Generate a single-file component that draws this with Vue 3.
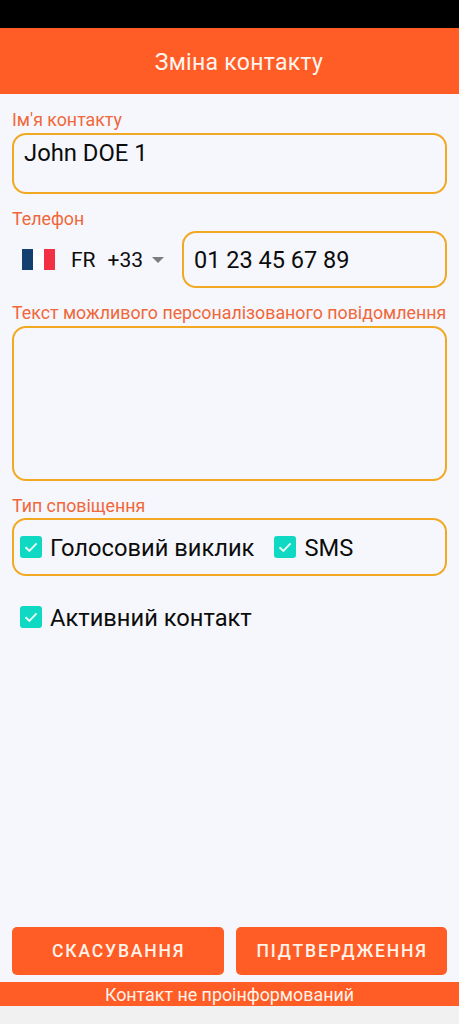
<script setup>
const boxes = ['Голосовий виклик', 'SMS']
</script>

<template>
  <div class="app">
    <div class="status"></div>
    <header class="head">Зміна контакту</header>
    <main class="form">
      <label class="lab l1">Ім'я контакту</label>
      <div class="box name">John DOE 1</div>
      <label class="lab l2">Телефон</label>
      <div class="phone">
        <div class="picker">
          <span class="flag"><i class="b"></i><i class="w"></i><i class="r"></i></span>
          <span class="cc">FR</span>
          <span class="dial">+33</span>
          <span class="caret"></span>
        </div>
        <div class="box num">01 23 45 67 89</div>
      </div>
      <label class="lab l3">Текст можливого персоналізованого повідомлення</label>
      <div class="box msg"></div>
      <label class="lab l4">Тип сповіщення</label>
      <div class="box types">
        <div v-for="b in boxes" :key="b" class="check">
          <svg class="tick" viewBox="0 0 22 22"><rect width="22" height="22" rx="3" fill="#0fd9c3"/><path d="M5.5 11.2l3.9 3.7 7.2-7.6" fill="none" stroke="#e9fbf8" stroke-width="1.9"/></svg>
          <span class="txt">{{ b }}</span>
        </div>
      </div>
      <div class="check active">
        <svg class="tick" viewBox="0 0 22 22"><rect width="22" height="22" rx="3" fill="#0fd9c3"/><path d="M5.5 11.2l3.9 3.7 7.2-7.6" fill="none" stroke="#e9fbf8" stroke-width="1.9"/></svg>
        <span class="txt">Активний контакт</span>
      </div>
      <div class="actions">
        <button class="btn">СКАСУВАННЯ</button>
        <button class="btn">ПІДТВЕРДЖЕННЯ</button>
      </div>
    </main>
    <div class="notice">Контакт не проінформований</div>
    <div class="nav"></div>
  </div>
</template>

<style scoped>
.app { width: 459px; height: 1024px; display: flex; flex-direction: column; background: #f6f7fc; font-family: Roboto, sans-serif; color: #0c0c0c; overflow: hidden; }
.status { height: 28px; background: #000; flex: none; }
.head { height: 66px; flex: none; background: #ff5c26; color: #fff5ee; font-size: 23px; letter-spacing: 0.3px; display: flex; align-items: center; justify-content: center; padding: 2px 0 0 19px; box-sizing: border-box; }
.form { flex: 1; display: flex; flex-direction: column; padding: 0 12px; min-height: 0; }
.lab { display: block; color: #f0673a; font-size: 17.8px; line-height: 20px; white-space: nowrap; }
.l1 { margin-top: 16px; }
.l2 { margin-top: 15px; }
.l3 { margin-top: 15px; }
.l4 { margin-top: 15px; }
.box { border: 2px solid #f2a922; border-radius: 14px; box-sizing: border-box; }
.name { height: 61px; margin-top: 3px; padding: 3px 10px; font-size: 23.8px; line-height: 30px; }
.phone { display: flex; align-items: center; height: 58px; margin-top: 1px; }
.picker { width: 170px; flex: none; display: flex; align-items: center; padding-left: 10px; box-sizing: border-box; font-size: 21px; }
.flag { display: flex; width: 33px; height: 21px; }
.flag i { flex: 1; }
.b { background: #14406f; }
.w { background: #fff; }
.r { background: #f32f44; }
.cc { margin-left: 16px; padding-top: 2px; }
.dial { margin-left: 12px; padding-top: 2px; }
.caret { margin-left: 9px; margin-top: 1px; border-left: 6px solid transparent; border-right: 6px solid transparent; border-top: 6px solid #7d7d7d; }
.num { flex: 1; height: 57px; display: flex; align-items: center; padding: 2px 0 0 10px; font-size: 23.5px; }
.msg { height: 155px; margin-top: 3px; }
.types { height: 58px; margin-top: 2px; display: flex; align-items: center; padding-left: 6px; gap: 20px; }
.check { display: flex; align-items: center; font-size: 23.7px; }
.txt { padding-top: 2px; }
.tick { width: 22px; height: 22px; margin-right: 8px; flex: none; }
.active { margin-top: 26px; padding-left: 8px; }
.actions { margin-top: auto; margin-bottom: 7px; display: flex; gap: 12px; }
.btn { flex: 1; height: 48px; border: 0; border-radius: 5px; background: #ff5c26; color: #fff3ea; font-family: Roboto, sans-serif; font-weight: 500; font-size: 17.5px; letter-spacing: 1.85px; padding: 0 0 0 2px; }
.notice { height: 24px; flex: none; background: #ff5c26; color: #fff3ea; font-size: 17.85px; line-height: 26px; text-align: center; }
.nav { height: 18px; flex: none; background: #f1f1f1; }
</style>
